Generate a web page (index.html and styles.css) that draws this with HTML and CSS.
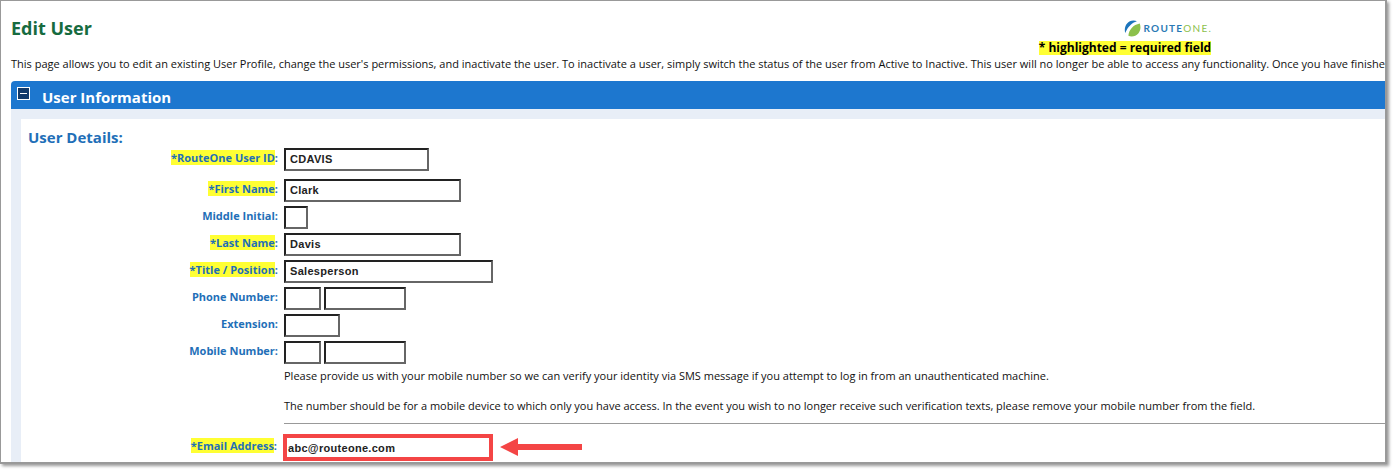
FILE: index.html
```html
<!DOCTYPE html>
<html lang="en">
<head>
<meta charset="utf-8">
<title>Edit User</title>
<link rel="stylesheet" href="styles.css">
</head>
<body>
<div class="frame">
  <header class="top">
    <h1 class="title">Edit User</h1>
    <div class="brand">
      <div class="logo">
        <svg class="logo-mark" width="17" height="17" viewBox="0 0 17 17">
          <path d="M1.200 13C-.4 7 3 .6 9.500.5c1.300 0 2.400.2 3.400.7C7.800 2.600 3.800 7 1.200 13z" fill="#1c75bc"/>
          <path d="M4.400 15.800C4.800 9.800 9.200 4.600 15.800 3.400c1.200 3.400.8 7.400-1.500 10.100-2.400 2.900-6.800 3.900-9.900 2.300z" fill="#8cc04b"/>
        </svg>
        <span class="logo-text"><span class="logo-route">ROUTE</span><span class="logo-one">ONE.</span></span>
      </div>
      <div class="required"><mark class="required-mark">* highlighted = required field</mark></div>
    </div>
  </header>
  <p class="intro">This page allows you to edit an existing User Profile, change the user's permissions, and inactivate the user. To inactivate a user, simply switch the status of the user from Active to Inactive. This user will no longer be able to access any functionality. Once you have finished making your changes, click Save.</p>
  <section class="panel">
    <div class="panel-head">
      <span class="toggle"><span class="toggle-bar"></span></span>
      <h2 class="panel-title">User Information</h2>
    </div>
    <div class="panel-body">
      <div class="panel-inner">
        <h3 class="details">User Details:</h3>
        <div class="form">
          <div class="row row-first">
            <label class="label"><span class="hl">*RouteOne User ID</span>:</label>
            <span class="field w145">CDAVIS</span>
          </div>
          <div class="row">
            <label class="label"><span class="hl">*First Name</span>:</label>
            <span class="field w177">Clark</span>
          </div>
          <div class="row">
            <label class="label">Middle Initial:</label>
            <span class="field w24"></span>
          </div>
          <div class="row">
            <label class="label"><span class="hl">*Last Name</span>:</label>
            <span class="field w177">Davis</span>
          </div>
          <div class="row">
            <label class="label"><span class="hl">*Title / Position</span>:</label>
            <span class="field w209">Salesperson</span>
          </div>
          <div class="row">
            <label class="label">Phone Number:</label>
            <span class="field w37"></span>
            <span class="field w82"></span>
          </div>
          <div class="row">
            <label class="label">Extension:</label>
            <span class="field w56"></span>
          </div>
          <div class="row">
            <label class="label">Mobile Number:</label>
            <span class="field w37"></span>
            <span class="field w82"></span>
          </div>
          <div class="notes">
            <p class="note">Please provide us with your mobile number so we can verify your identity via SMS message if you attempt to log in from an unauthenticated machine.</p>
            <p class="note note-last">The number should be for a mobile device to which only you have access. In the event you wish to no longer receive such verification texts, please remove your mobile number from the field.</p>
            <div class="rule"></div>
          </div>
          <div class="row row-email">
            <label class="label"><span class="hl">*Email Address</span>:</label>
            <span class="field-email">abc@routeone.com</span>
            <svg class="arrow" width="82" height="20" viewBox="0 0 82 20">
              <path d="M0 10L18 1V7H82V13H18V19z" fill="#f44545"/>
            </svg>
          </div>
        </div>
      </div>
    </div>
  </section>
</div>
</body>
</html>
```
FILE: styles.css
```css
* { box-sizing: border-box; }
html, body { margin: 0; padding: 0; background: #fff; }
body { height: 470px; overflow: hidden; font-family: "Open Sans", "Noto Sans", sans-serif; font-size: 11px; color: #111; }
.frame { width: 1387px; height: 464px; border: solid #999; border-width: 1px 2px 2px 1px; box-shadow: 2px 2px 3px #999; overflow: hidden; background: #fff; padding: 0 0 0 10px; }
.top { display: flex; justify-content: space-between; height: 56px; }
.title { margin: 15px 0 0; font-size: 18px; line-height: 24px; font-weight: 700; color: #176b3f; }
.brand { width: 172px; margin-right: 174px; display: flex; flex-direction: column; align-items: center; padding-top: 18px; }
.logo { display: flex; align-items: center; gap: 3px; height: 18px; margin-left: 87px; width: 90px; flex: none; }
.logo-mark { flex: none; }
.logo-text { font-family: Lato, sans-serif; font-size: 10px; letter-spacing: 1.250px; white-space: nowrap; }
.logo-route { color: #2a7ab5; font-weight: 700; }
.logo-one { color: #8cc04b; font-weight: 400; }
.required { margin-top: 4px; line-height: 14px; white-space: nowrap; }
.required-mark { background: #ffff33; color: #000; font-size: 12px; font-weight: 700; display: inline-block; height: 14px; line-height: 13px; }
.intro { margin: 0; height: 24px; line-height: 14px; white-space: nowrap; color: #111; }
.panel { width: 1400px; }
.panel-head { height: 28px; background: #1d77cf; border-radius: 4px 0 0 0; display: flex; align-items: flex-start; padding: 6px 0 0 6px; }
.toggle { width: 13px; height: 13px; background: #123a6b; border: 1px solid #fff; display: flex; align-items: center; justify-content: center; flex: none; }
.toggle-bar { width: 7px; height: 1px; background: #fff; }
.panel-title { margin: 0 0 0 12px; font-size: 15px; line-height: 21px; font-weight: 700; color: #fff; }
.panel-body { background: #e8eef7; padding: 10px 0 0 10px; height: 400px; }
.panel-inner { background: #fff; height: 100%; padding: 8px 0 0 7px; }
.details { margin: 0; font-size: 15px; line-height: 20px; font-weight: 700; color: #1f6fb8; }
.form { margin-top: 1px; }
.row { display: flex; align-items: flex-start; gap: 3px; height: 23px; margin-bottom: 4px; }
.row-first { margin-bottom: 8px; }
.label { width: 250px; margin-right: 3px; text-align: right; font-weight: 700; color: #1f6fb8; line-height: 15px; padding-top: 2px; white-space: nowrap; flex: none; }
.hl { background: #ffff33; }
.field { display: block; height: 23px; border: 2px solid; border-color: #222 #666 #666 #222; padding: 0 4px; font-family: "Liberation Sans", Arial, sans-serif; font-size: 11px; font-weight: 700; line-height: 19px; letter-spacing: .3px; color: #222; flex: none; }
.w24 { width: 24px; }
.w37 { width: 37px; }
.w56 { width: 56px; }
.w82 { width: 82px; }
.w145 { width: 145px; }
.w177 { width: 177px; }
.w209 { width: 209px; }
.notes { margin-left: 256px; width: 1102px; }
.note { margin: 0; line-height: 14px; padding-top: 1px; height: 30px; }
.note-last { height: 25px; }
.rule { height: 1px; background: #999; }
.row-email { margin-top: 10px; height: 27px; gap: 0; }
.row-email .label { width: 249px; margin-right: 6px; padding-top: 4px; }
.field-email { display: block; width: 210px; height: 27px; border: 4px solid #f44545; padding: 0 1px; font-family: "Liberation Sans", Arial, sans-serif; font-size: 11px; font-weight: 700; line-height: 20px; letter-spacing: .3px; color: #222; flex: none; }
.arrow { flex: none; margin: 3px 0 0 7px; }
```
